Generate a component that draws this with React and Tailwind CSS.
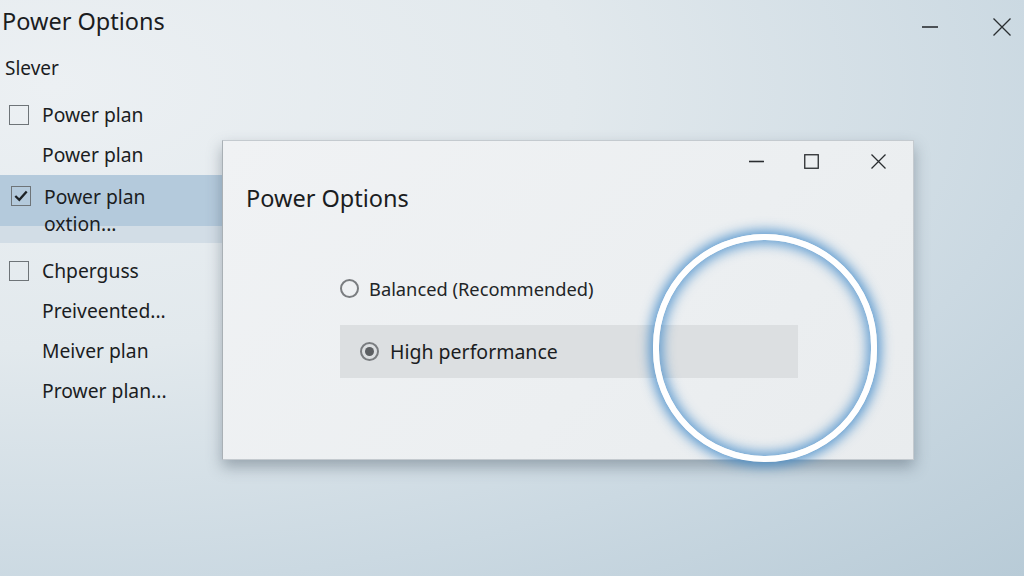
const font = { fontFamily: '"Noto Sans", "Open Sans", sans-serif' };

function MinusIcon({ w }) {
  return (
    <svg width={w} height={w} viewBox={`0 0 ${w} ${w}`} fill="none">
      <path d={`M0 ${w / 2} H${w}`} stroke="currentColor" strokeWidth="1.6" />
    </svg>
  );
}

function CloseIcon({ w }) {
  return (
    <svg width={w} height={w} viewBox={`0 0 ${w} ${w}`} fill="none">
      <path d={`M0.5 0.5 L${w - 0.5} ${w - 0.5} M${w - 0.5} 0.5 L0.5 ${w - 0.5}`} stroke="currentColor" strokeWidth="1.3" />
    </svg>
  );
}

function MaxIcon({ w }) {
  return (
    <svg width={w} height={w} viewBox={`0 0 ${w} ${w}`} fill="none">
      <rect x="0.75" y="0.75" width={w - 1.5} height={w - 1.5} stroke="currentColor" strokeWidth="1.3" />
    </svg>
  );
}

function Checkbox({ checked }) {
  return (
    <span className="w-5 h-5 border-[1.5px] border-[#6e7478] flex items-center justify-center shrink-0">
      {checked && (
        <svg width="16" height="16" viewBox="0 0 16 16" fill="none">
          <path d="M2.3 8 L6.3 11.8 L13.7 3.4" stroke="#1d2226" strokeWidth="2.3" />
        </svg>
      )}
    </span>
  );
}

function Row({ box, children }) {
  return (
    <div className="h-10 flex items-center pl-[9px] gap-[13px] text-[19.3px] text-[#1b1d1f]">
      {box ? <Checkbox /> : <span className="w-5 shrink-0" />}
      <span>{children}</span>
    </div>
  );
}

function Radio({ selected }) {
  return (
    <span className="w-[19px] h-[19px] rounded-full border-2 border-[#7a7d80] flex items-center justify-center shrink-0">
      {selected && <span className="w-[9px] h-[9px] rounded-full bg-[#5c5f62]" />}
    </span>
  );
}

export default function App() {
  return (
    <div
      className="relative w-[1024px] h-[576px] overflow-hidden bg-[radial-gradient(ellipse_at_5%_15%,#ecf0f3_0%,#e2e9ed_38%,#cbd9e2_72%,#b8cbd7_100%)]"
      style={font}
    >
      {/* top right window buttons */}
      <div className="absolute top-[18px] right-[13px] flex items-center gap-[55px] text-[#2a2e31]">
        <MinusIcon w={16} />
        <CloseIcon w={18} />
      </div>

      {/* left column */}
      <div className="flex flex-col w-[222px]">
        <div className="h-[30px] mt-[6px] pl-[2px] text-[23.5px] leading-[30px] text-[#1b1d1f]">Power Options</div>
        <div className="h-[30px] mt-[17px] pl-[5px] text-[19px] leading-[30px] text-[#1b1d1f]">Slever</div>
        <div className="mt-[12px]">
          <Row box>Power plan</Row>
          <Row>Power plan</Row>
        </div>
        <div className="h-[68px] bg-[linear-gradient(to_bottom,#b4cadc_0,#b4cadc_51px,#d2dde6_51px)] flex pl-[11px] pt-[8px] gap-[13px] text-[19.3px] text-[#1b1d1f]">
          <span className="mt-[3px]">
            <Checkbox checked />
          </span>
          <span className="leading-[27px]">
            Power plan
            <br />
            oxtion...
          </span>
        </div>
        <div className="mt-[8px]">
          <Row box>Chperguss</Row>
          <Row>Preiveented...</Row>
          <Row>Meiver plan</Row>
          <Row>Prower plan...</Row>
        </div>
      </div>

      {/* dialog window */}
      <div className="absolute left-[222px] top-[140px] w-[692px] h-[320px] border border-[#c4cacf] border-l-[#a9b0b5] bg-[linear-gradient(135deg,#f0f2f4_0%,#eceff1_60%,#e9ecee_100%)] shadow-[0_7px_14px_rgba(60,75,90,0.4)] flex flex-col">
        <div className="h-[40px] flex items-center justify-end pr-[27px] text-[#2a2d30]">
          <MinusIcon w={15} />
          <span className="ml-[40px]">
            <MaxIcon w={15} />
          </span>
          <span className="ml-[52px]">
            <CloseIcon w={15} />
          </span>
        </div>
        <div className="pl-[23px] mt-[2px] text-[23.5px] leading-[30px] text-[#1b1d1f]">Power Options</div>
        <div className="pl-[117px] mt-[62px] flex items-center gap-[10px] text-[18.3px] text-[#222527]">
          <Radio />
          <span>Balanced (Recommended)</span>
        </div>
        <div className="ml-[117px] mt-[23px] w-[458px] h-[53px] bg-[#dcdfe1] flex items-center pl-[20px] gap-[11px] text-[19.5px] text-[#1b1d1f]">
          <Radio selected />
          <span>High performance</span>
        </div>
      </div>

      {/* glowing ring */}
      <div className="absolute left-[653px] top-[234px] w-[224px] h-[228px] rounded-full border-[6px] border-white shadow-[0_0_12px_4px_rgba(60,135,200,0.8),inset_0_0_12px_4px_rgba(60,135,200,0.75)]" />
    </div>
  );
}
